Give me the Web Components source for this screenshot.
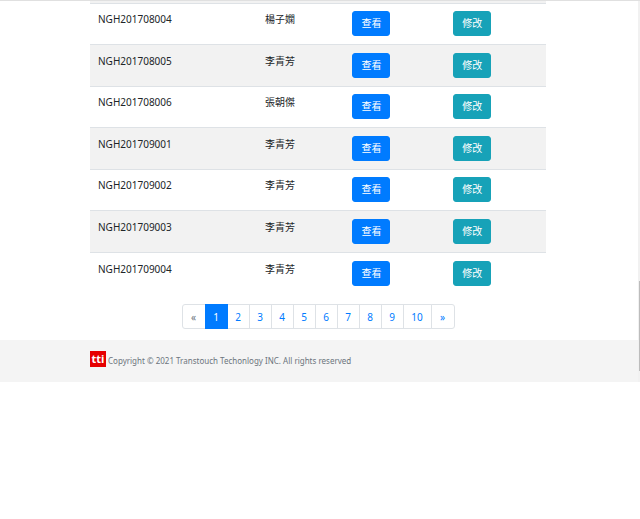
<!DOCTYPE html>
<html lang="zh-Hant">
<head>
<meta charset="utf-8">
<title>Records</title>
<style>
body { margin: 0; background: #fff; color: #212529; font: 10px/16px "Noto Sans", "Noto Sans CJK TC", sans-serif; }
</style>
</head>
<body>
<app-shell>
  <record-table></record-table>
  <page-nav current="1" pages="10"></page-nav>
  <site-footer slot="footer">Copyright © 2021 Transtouch Techonlogy INC. All rights reserved</site-footer>
</app-shell>
<script>
const define = (name, html, setup) => {
  const template = document.createElement('template');
  template.innerHTML = html;
  customElements.define(name, class extends HTMLElement {
    constructor() {
      super();
      this.attachShadow({ mode: 'open' }).append(template.content.cloneNode(true));
    }
    connectedCallback() { if (setup) setup(this, this.shadowRoot); }
  });
};

define('app-shell', `
<style>
:host { display: grid; grid-template-columns: 1fr 2px; border-top: 1px solid #e0e0e0; }
main { padding: 0 92px 11px 90px; }
.track { background: #f1f1f1; display: grid; grid-template-rows: 280fr 90fr 11fr; justify-items: end; }
.thumb { grid-row: 2; width: 1px; background: #bcbcbc; }
</style>
<div><main><slot></slot></main><slot name="footer"></slot></div>
<div class="track"><div class="thumb"></div></div>`);

define('action-button', `
<style>
:host { display: inline-block; vertical-align: top; }
button { display: block; font: inherit; line-height: 17px; color: #fff; padding: 3px 8px; border: 1px solid #007bff; border-radius: 3px; background: #007bff; cursor: pointer; }
:host([kind="info"]) button { background: #17a2b8; border-color: #17a2b8; }
</style>
<button type="button"><slot></slot></button>`);

define('record-table', `
<style>
:host { display: block; }
table { width: 100%; border-collapse: separate; border-spacing: 0; table-layout: fixed; border-top: 2px solid #f2f2f2; }
.id { width: 36.6%; } .name { width: 19.2%; } .view { width: 22.1%; }
td { padding: 7px 8px 8px; border-top: 1px solid #dee2e6; vertical-align: top; }
tr:nth-child(even) td { background: #f2f2f2; padding-top: 8px; }
tr:last-child td { padding-top: 8px; }
</style>
<table>
<colgroup><col class="id"><col class="name"><col class="view"><col></colgroup>
<tbody></tbody></table>`, (host, root) => {
  const rows = [
    ['NGH201708004', '楊子嫻'], ['NGH201708005', '李青芳'], ['NGH201708006', '張朝傑'],
    ['NGH201709001', '李青芳'], ['NGH201709002', '李青芳'], ['NGH201709003', '李青芳'],
    ['NGH201709004', '李青芳']
  ];
  root.querySelector('tbody').innerHTML = rows.map(([id, name]) => `
    <tr><td>${id}</td><td>${name}</td>
    <td><action-button>查看</action-button></td>
    <td><action-button kind="info">修改</action-button></td></tr>`).join('');
});

define('page-nav', `
<style>
:host { display: block; padding-top: 10px; }
ul { display: flex; justify-content: center; list-style: none; margin: 0; padding: 0; }
li + li { margin-left: -1px; }
a { display: block; box-sizing: border-box; min-width: 23px; padding: 4px 7px 3px; text-align: center; border: 1px solid #dee2e6; color: #007bff; background: #fff; text-decoration: none; }
li:first-child a { min-width: 24px; color: #6c757d; border-radius: 3px 0 0 3px; }
li:last-child a { min-width: 24px; border-radius: 0 3px 3px 0; }
li:nth-last-child(2) a { min-width: 29px; }
a[aria-current] { position: relative; color: #fff; background: #007bff; border-color: #007bff; }
</style>
<nav aria-label="Pages"><ul></ul></nav>`, (host, root) => {
  const current = host.getAttribute('current');
  const labels = ['«', ...Array.from({ length: +host.getAttribute('pages') }, (_, i) => String(i + 1)), '»'];
  root.querySelector('ul').innerHTML = labels.map(l =>
    `<li><a href="#"${l === current ? ' aria-current="page"' : ''}>${l}</a></li>`).join('');
});

define('site-footer', `
<style>
:host { display: flex; align-items: center; gap: 2px; padding: 10px 92px 15px 90px; background: #f4f4f4; color: #6c757d; font-size: 8px; }
.logo { width: 16px; height: 16px; background: #e60000; color: #fff; font: bold 11px/15px "Open Sans", sans-serif; text-align: center; }
p { margin: 0; padding-top: 4px; line-height: 13px; }
</style>
<span class="logo">tti</span><p><slot></slot></p>`);
</script>
</body>
</html>
